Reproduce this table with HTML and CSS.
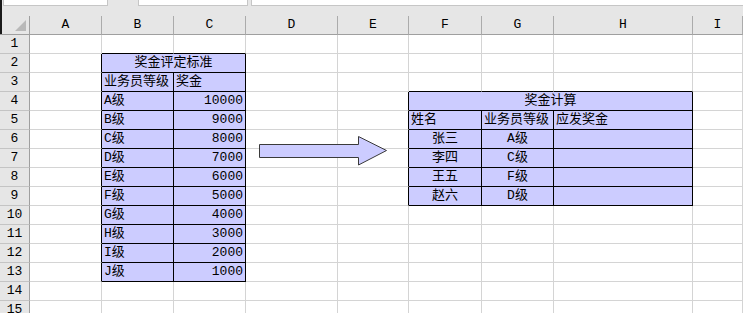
FILE: index.html
```html
<!DOCTYPE html>
<html lang="zh">
<head>
<meta charset="utf-8">
<title>奖金</title>
<link rel="stylesheet" href="styles.css">
</head>
<body>
<div class="app">
  <div class="topbar">
    <div class="namebox"></div>
    <div class="fxbox"></div>
    <div class="formula"></div>
  </div>
  <div class="sheet">
    <div class="corner"><span class="tri"></span></div>
    <div class="ch">A</div><div class="ch">B</div><div class="ch">C</div><div class="ch">D</div><div class="ch">E</div><div class="ch">F</div><div class="ch">G</div><div class="ch">H</div><div class="ch">I</div>

    <div class="rh">1</div><div class="c"></div><div class="c bbk"></div><div class="c bbk"></div><div class="c"></div><div class="c"></div><div class="c"></div><div class="c"></div><div class="c"></div><div class="c"></div>

    <div class="rh">2</div><div class="c brk"></div><div class="t center span2">奖金评定标准</div><div class="c"></div><div class="c"></div><div class="c"></div><div class="c"></div><div class="c"></div><div class="c"></div>

    <div class="rh">3</div><div class="c brk"></div><div class="t">业务员等级</div><div class="t">奖金</div><div class="c"></div><div class="c"></div><div class="c bbk"></div><div class="c bbk"></div><div class="c bbk"></div><div class="c"></div>

    <div class="rh">4</div><div class="c brk"></div><div class="t">A级</div><div class="t right">10000</div><div class="c"></div><div class="c brk"></div><div class="t center span3">奖金计算</div><div class="c"></div>

    <div class="rh">5</div><div class="c brk"></div><div class="t">B级</div><div class="t right">9000</div><div class="c"></div><div class="c brk"></div><div class="t">姓名</div><div class="t">业务员等级</div><div class="t">应发奖金</div><div class="c"></div>

    <div class="rh">6</div><div class="c brk"></div><div class="t">C级</div><div class="t right">8000</div><div class="c"></div><div class="c brk"></div><div class="t center">张三</div><div class="t center">A级</div><div class="t"></div><div class="c"></div>

    <div class="rh">7</div><div class="c brk"></div><div class="t">D级</div><div class="t right">7000</div><div class="c"></div><div class="c brk"></div><div class="t center">李四</div><div class="t center">C级</div><div class="t"></div><div class="c"></div>

    <div class="rh">8</div><div class="c brk"></div><div class="t">E级</div><div class="t right">6000</div><div class="c"></div><div class="c brk"></div><div class="t center">王五</div><div class="t center">F级</div><div class="t"></div><div class="c"></div>

    <div class="rh">9</div><div class="c brk"></div><div class="t">F级</div><div class="t right">5000</div><div class="c"></div><div class="c brk"></div><div class="t center">赵六</div><div class="t center">D级</div><div class="t"></div><div class="c"></div>

    <div class="rh">10</div><div class="c brk"></div><div class="t">G级</div><div class="t right">4000</div><div class="c"></div><div class="c"></div><div class="c"></div><div class="c"></div><div class="c"></div><div class="c"></div>

    <div class="rh">11</div><div class="c brk"></div><div class="t">H级</div><div class="t right">3000</div><div class="c"></div><div class="c"></div><div class="c"></div><div class="c"></div><div class="c"></div><div class="c"></div>

    <div class="rh">12</div><div class="c brk"></div><div class="t">I级</div><div class="t right">2000</div><div class="c"></div><div class="c"></div><div class="c"></div><div class="c"></div><div class="c"></div><div class="c"></div>

    <div class="rh">13</div><div class="c brk"></div><div class="t">J级</div><div class="t right">1000</div><div class="c"></div><div class="c"></div><div class="c"></div><div class="c"></div><div class="c"></div><div class="c"></div>

    <div class="rh">14</div><div class="c"></div><div class="c"></div><div class="c"></div><div class="c"></div><div class="c"></div><div class="c"></div><div class="c"></div><div class="c"></div><div class="c"></div>

    <div class="rh">15</div><div class="c"></div><div class="c"></div><div class="c"></div><div class="c"></div><div class="c"></div><div class="c"></div><div class="c"></div><div class="c"></div><div class="c"></div>
  </div>
  <svg class="arrow" width="132" height="32" viewBox="0 0 132 32" aria-hidden="true">
    <path d="M1.5 8.5 H100.5 V0.5 L128.5 14.5 L100.5 29 V21.5 H1.5 Z" fill="#ccccff" stroke="#3a3a3a" stroke-width="1" stroke-linejoin="miter"/>
  </svg>
</div>
</body>
</html>
```

FILE: styles.css
```css
html, body {
  margin: 0;
  padding: 0;
  background: #ffffff;
  overflow: hidden;
}

.app {
  position: relative;
  width: 743px;
  height: 313px;
  overflow: hidden;
  font-family: "Liberation Mono", "Noto Sans CJK SC", monospace;
  font-size: 13px;
  color: #000;
  border-left: 0;
}

.topbar {
  height: 16px;
  background: #e6e6e6;
  display: flex;
  align-items: flex-start;
  box-shadow: inset 2px 0 0 #1a1a1a;
}

.namebox {
  margin-left: 3px;
  width: 103px;
  height: 5px;
  background: #fff;
  border: 1px solid #c6c6c6;
  border-top: 0;
}

.fxbox {
  margin-left: 30px;
  width: 108px;
  height: 5px;
  background: #fff;
  border: 1px solid #c6c6c6;
  border-top: 0;
}

.formula {
  margin-left: 3px;
  flex: 1;
  height: 5px;
  background: #fff;
  border: 1px solid #c6c6c6;
  border-top: 0;
  border-right: 0;
}

.sheet {
  display: grid;
  grid-template-columns: 30px 72px 72px 72px 92px 71px 73px 72px 139px 1fr;
  grid-auto-rows: 19px;
}

.sheet > div {
  box-sizing: border-box;
  border-right: 1px solid #d4d4d4;
  border-bottom: 1px solid #d4d4d4;
  display: flex;
  align-items: flex-end;
  line-height: 16px;
  padding-bottom: 1px;
  white-space: nowrap;
  overflow: hidden;
}

.sheet > .corner {
  background: #e6e6e6;
  border-right: 1px solid #9f9f9f;
  border-bottom: 1px solid #9f9f9f;
  position: relative;
  box-shadow: inset 2px 0 0 #1a1a1a;
}

.tri {
  position: absolute;
  right: 3px;
  bottom: 3px;
  width: 0;
  height: 0;
  border-left: 11px solid transparent;
  border-bottom: 11px solid #b9b9b9;
}

.sheet > .ch {
  background: #e6e6e6;
  border-right: 1px solid #ababab;
  border-bottom: 1px solid #9f9f9f;
  justify-content: center;
}

.sheet > .rh {
  background: #e6e6e6;
  border-right: 1px solid #9f9f9f;
  border-bottom: 1px solid #c4c4c4;
  justify-content: center;
}

.sheet > .bbk {
  border-bottom-color: #000;
}

.sheet > .brk {
  border-right-color: #000;
}

.sheet > .t {
  background: #ccccff;
  border-right-color: #000;
  border-bottom-color: #000;
  padding-left: 2px;
  padding-right: 2px;
}

.sheet > .center {
  justify-content: center;
}

.sheet > .right {
  justify-content: flex-end;
}

.span2 {
  grid-column: span 2;
}

.span3 {
  grid-column: span 3;
}

.arrow {
  position: absolute;
  left: 258px;
  top: 136px;
  display: block;
}
```
